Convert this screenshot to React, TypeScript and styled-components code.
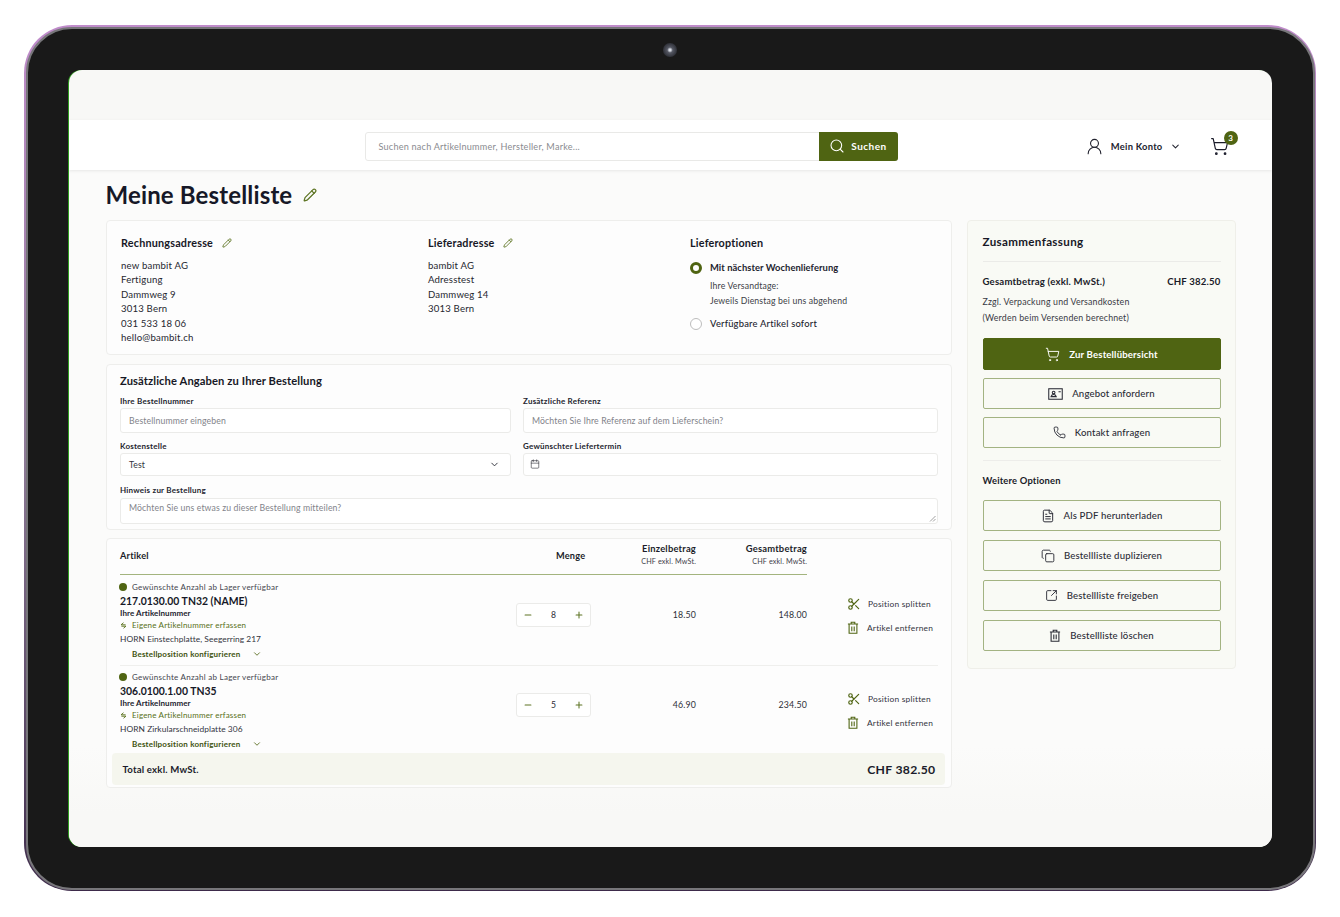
import React from "react";
import styled, { createGlobalStyle } from "styled-components";
import {
  Search, ChevronDown, ShoppingCart, Pencil, Scissors, Phone, Copy, SquareArrowOutUpRight, FileText, Calendar, Minus, Plus, UserRound,
} from "lucide-react";

const Global = createGlobalStyle`
  html, body { margin: 0; padding: 0; background: #fff; }
  body { font-family: "Lato", "Liberation Sans", sans-serif; color: #1b1c2b; -webkit-font-smoothing: antialiased; }
  * { box-sizing: border-box; }
`;
const green = "#4f6412";
const lineGreen = "#a3b382";

const Bezel = styled.div`
  width: 1292px; height: 866px; margin: 25px 24px 26px; padding: 1.5px;
  border-radius: 48px; background: linear-gradient(180deg, #c08ccb 0%, #8d7a96 50%, #3d2a4a 100%);
`;
const Frame = styled.div`
  position: relative; width: 100%; height: 100%; padding: 41px;
  border-radius: 46px; background: #191919; border: 2.5px solid #77767a;
`;
const Camera = styled.div`
  position: absolute; left: 635px; top: 14px; width: 14px; height: 14px; border-radius: 50%;
  background: radial-gradient(circle, #d8dce4 0 10%, #555863 28%, #33353d 65%, #26272c 100%);
`;
const Screen = styled.div`
  width: 1203px; height: 777px; border-radius: 13px; overflow: hidden; background: #f8f8f6;
  box-shadow: -1px 0 0 #2f9b1e; display: flex; flex-direction: column;
`;
const TopStrip = styled.div`height: 50px; flex: none;`;
const Header = styled.header`
  height: 50px; flex: none; background: #fff; box-shadow: 0 1px 3px rgba(30,30,30,.09); position: relative;
  display: flex; align-items: center; padding: 3px 34px 0 296px;
`;
const SearchBox = styled.div`
  width: 533px; height: 29px; display: flex; border: 1px solid #e9e9e7; border-radius: 3px; background: #fff;
`;
const SearchInput = styled.div`flex: 1; font-size: 9.1px; line-height: 27px; padding-left: 13px; color: #8a8b90; letter-spacing: .22px;`;
const SearchBtn = styled.div`
  width: 79px; margin: -1px; border-radius: 0 3px 3px 0; background: ${green}; color: #fff; display: flex;
  align-items: center; justify-content: center; gap: 6px; font-size: 10px; font-weight: 700; letter-spacing: .5px;
`;
const Account = styled.div`
  margin-left: auto; display: flex; align-items: center; font-size: 9.4px; font-weight: 700; letter-spacing: .25px; color: #22232f;
  & > span { margin: 0 7px 0 7px; }
`;
const CartWrap = styled.div`position: relative; margin-left: 29px; width: 28px; height: 22px; display: flex; align-items: center;`;
const Badge = styled.div`
  position: absolute; right: 0; top: -4px; width: 14px; height: 14px; border-radius: 50%; background: ${green};
  color: #fff; font-size: 8px; font-weight: 700; text-align: center; line-height: 14px;
`;
const Body = styled.main`
  flex: 1; background: linear-gradient(180deg, #fbfbfa 0%, #fbfbfa 85%, #f8f8f6 95%); padding: 0 36px 0 37px;
`;
const TitleRow = styled.div`
  height: 50px; display: flex; align-items: center; gap: 11px;
  h1 { margin: 0; font-size: 24px; line-height: 50px; font-weight: 700; color: #161827; letter-spacing: .15px; }
`;
const Columns = styled.div`display: grid; grid-template-columns: 846px 269px; column-gap: 15px; align-items: start;`;
const Stack = styled.div`display: flex; flex-direction: column; gap: 9px;`;
const Card = styled.section`background: #fdfdfd; border: 1px solid #eeeeec; border-radius: 4px;`;
const AddressCard = styled(Card)`
  height: 135px; padding: 15px 14.5px; display: grid; grid-template-columns: 307px 262px 1fr;
`;
const SubTitle = styled.h3`
  margin: 0; font-size: 10.8px; line-height: 14px; font-weight: 700; color: #171826; letter-spacing: .2px;
  display: flex; align-items: center; gap: ${p => p.$gap ?? 10}px;
`;
const AddrLines = styled.div`margin-top: 9px; font-size: 9.6px; line-height: 14.6px; color: #26272f; letter-spacing: .18px;`;
const RadioRow = styled.div`
  display: flex; align-items: center; gap: 8px; font-size: 9.4px; font-weight: ${p => p.$bold ? 700 : 500};
  letter-spacing: ${p => p.$bold ? ".06px" : ".2px"}; height: 14px; color: #23242f;
`;
const Radio = styled.span`
  width: 12px; height: 12px; border-radius: 50%; flex: none; background: #fff;
  border: ${p => p.$on ? `3.5px solid ${green}` : "1px solid #bdbdbd"};
`;
const RadioHint = styled.div`margin-left: 20px; font-size: 8.7px; line-height: 15.5px; color: #3c3d46; letter-spacing: .15px; margin-top: 3px; margin-bottom: 8px;`;
const RadioGroup = styled.div`margin-top: 11px;`;

const FormCard = styled(Card)`height: 166px; padding: 8px 13px 0 13.5px;`;
const FormTitle = styled.h2`margin: 0 0 7px; font-size: 11.2px; line-height: 15px; font-weight: 700; color: #171826; letter-spacing: .1px;`;
const FormGrid = styled.div`display: grid; grid-template-columns: 391px 415px; column-gap: 12px;`;
const Field = styled.div`display: flex; flex-direction: column; grid-column: ${p => p.$full ? "1 / -1" : "auto"};`;
const Label = styled.label`font-size: 8px; line-height: 12px; font-weight: 700; color: #24252f; letter-spacing: .22px; margin-bottom: 1px;`;
const InputBox = styled.div`
  height: ${p => p.$h}px; margin-bottom: ${p => p.$mb ?? 7}px; border: 1px solid #ebebe9; border-radius: 3px; background: #fff; padding: 0 8px;
  display: flex; align-items: center; position: relative; font-size: 8.7px; letter-spacing: .12px; color: ${p => p.$dark ? "#33343d" : "#82838a"};
`;
const SelectBox = styled(InputBox)`justify-content: space-between; padding-right: 10px;`;
const TextArea = styled(InputBox)`align-items: flex-start; padding-top: 3px; line-height: 12px; margin-top: 1px;`;
const DateIcon = styled(Calendar)`margin-left: -2px;`;
const Grip = styled.svg`position: absolute; right: 1px; bottom: 1px;`;

const TableCard = styled(Card)`height: 250px; margin-top: -1px; padding: 0 6px 2px 13.5px; display: flex; flex-direction: column; position: relative;`;
const Grid = styled.div`display: grid; grid-template-columns: 396px 75px 105px 111px 1fr;`;
const TableHead = styled(Grid)`
  height: 36px; padding-bottom: 2px; align-items: center; width: 687px; grid-template-columns: 396px 105px 75px 111px; border-bottom: 1px solid #a3b47e; font-size: 9.2px; font-weight: 700; color: #1c1d2a; letter-spacing: .2px;
`;
const HeadRight = styled.div`
  text-align: right; line-height: 13px; font-size: 9.4px; small { display: block; font-size: 7.2px; font-weight: 400; color: #3f4049; letter-spacing: .15px; }
`;
const HeadCenter = styled.div`padding-left: 40px;`;
const Row = styled(Grid)`
  height: ${p => p.$h}px; margin-right: 7px; align-items: start; border-bottom: ${p => p.$last ? "none" : "1px solid #efefed"};
  padding-top: ${p => p.$pt}px;
`;
const Info = styled.div``;
const Stock = styled.div`
  margin-left: -1px; display: flex; align-items: center; gap: 5px; font-size: 8px; line-height: 12px; color: #44454d; letter-spacing: .26px;
  &::before { content: ""; width: 8px; height: 8px; border-radius: 50%; background: ${green}; }
`;
const Sku = styled.div`margin-top: 1px; font-size: 10.4px; line-height: 14px; font-weight: 700; color: #161827; letter-spacing: .02px;`;
const Own = styled.div`margin-top: 1px; font-size: 8px; line-height: 9px; font-weight: 700; color: #22232e; letter-spacing: .08px;`;
const Link = styled.div`
  display: flex; align-items: center; gap: 5px; margin-top: 1px; font-size: 8px; line-height: 13px; color: #587019; letter-spacing: .18px;
`;
const Desc = styled.div`font-size: 8.4px; line-height: 15px; color: #33343d; letter-spacing: .05px;`;
const Config = styled.div`
  display: flex; align-items: center; gap: 12px; margin: 1px 0 0 12px; font-size: 8px; line-height: 13px; font-weight: 700; color: #40530f; letter-spacing: .2px;
`;
const Qty = styled.div`
  width: 75px; height: 24px; margin-top: 22px; border: 1px solid #ebebe9; border-radius: 3px; background: #fff; display: flex; align-items: center; justify-content: space-between;
  padding: 0 6px; font-size: 8.6px; color: #2a2b35;
`;
const Amount = styled.div`margin-top: 27px; line-height: 14px; text-align: right; font-size: 8.8px; color: #2e2f38; letter-spacing: .15px;`;
const Actions = styled.div`padding-left: 40px; margin-top: ${p => p.$at}px; display: flex; flex-direction: column; gap: 10px;`;
const Action = styled.div`
  display: flex; align-items: center; gap: ${p => p.$gap ?? 7}px; height: 14px; font-size: 8.4px; color: #33343d; letter-spacing: .22px;
`;
const Total = styled.div`
  position: absolute; left: 5px; right: 6px; bottom: 2px; height: 32px; background: #f5f6ee; border-radius: 4px;
  display: flex; align-items: center; justify-content: space-between; padding: 1px 9px 0 11px;
  font-weight: 700; color: #1b1c2b;
`;
const TotalLabel = styled.span`font-size: 9.6px; letter-spacing: .2px;`;
const TotalValue = styled.span`font-size: 12.2px; letter-spacing: .3px;`;

const Side = styled.aside`
  height: 449px; padding: 0 14px 0 15px; background: #f9faf5; border: 1px solid #efefe9; border-radius: 4px; display: flex; flex-direction: column;
`;
const SideTitle = styled.h2`
  margin: 0; height: 41px; padding-top: 13px; font-size: 11.6px; line-height: 15px; font-weight: 700; color: #171826; letter-spacing: .35px; border-bottom: 1px solid #ebebe8;
`;
const SumRow = styled.div`
  margin-top: 13px; display: flex; justify-content: space-between; font-size: 9.6px; line-height: 14px; font-weight: 700; letter-spacing: .2px; color: #1a1b28;
`;
const SumNote = styled.div`margin-top: 5px; font-size: 8.8px; line-height: 16.800px; color: #3a3b45; letter-spacing: .17px;`;
const Btn = styled.div`
  height: ${p => p.$h ?? 31}px; margin-top: ${p => p.$mt ?? 8}px; border-radius: 2px; display: flex; align-items: center; justify-content: center; gap: 9px;
  font-size: 9.6px; letter-spacing: .15px;
  background: ${p => p.$primary ? green : "transparent"}; color: ${p => p.$primary ? "#fff" : "#2b2c36"}; font-weight: ${p => p.$primary ? 700 : 500};
  border: 1px solid ${p => p.$primary ? green : lineGreen};
`;
const SideRule = styled.div`height: 1px; margin-top: 12px; background: #ededea;`;
const SideSub = styled.div`margin-top: 13px; font-size: 9.4px; line-height: 13px; font-weight: 700; letter-spacing: .18px; color: #1a1b28;`;

const TrashIcon = ({ size = 12, color = green }: { size?: number; color?: string }) => (
  <svg width={size} height={size * 1.1} viewBox="0 0 20 22" fill="none" stroke={color} strokeWidth="1.8">
    <path d="M1.500 5h17M7 5V2h6v3M3.500 5v15.500h13V5M8 9v8M12 9v8" />
  </svg>
);
const SwapIcon = () => (
  <svg width="7" height="7" viewBox="0 0 10 10" fill="none" stroke="#587019" strokeWidth="1.3">
    <path d="M5 1 1.500 4H8M5 9l3.500-3H2" />
  </svg>
);
const OfferIcon = () => (
  <svg width="15" height="12" viewBox="0 0 20 16" fill="none" stroke="#2b2c36" strokeWidth="1.4">
    <rect x="1" y="1" width="18" height="14" />
    <circle cx="7.500" cy="6" r="1.800" />
    <path d="M4 11.500c.6-2 2-2.800 3.500-2.800s2.900.8 3.500 2.800zM14 5h3" />
  </svg>
);
const PencilIcon = ({ s }: { s: number }) => <Pencil size={s} color="#5e7524" strokeWidth={2.1} />;

type Item = { sku: string; desc: string; qty: number; one: string; total: string; h: number; pt: number; at: number; last?: boolean };
const items: Item[] = [
  { sku: "217.0130.00 TN32 (NAME)", desc: "HORN Einstechplatte, Seegerring 217", qty: 8, one: "18.50", total: "148.00", h: 91, pt: 6, at: 16 },
  { sku: "306.0100.1.00 TN35", desc: "HORN Zirkularschneidplatte 306", qty: 5, one: "46.90", total: "234.50", h: 90, pt: 5, at: 21, last: true },
];

export default function App() {
  return (
    <>
      <Global />
      <Bezel>
        <Frame>
          <Camera />
          <Screen>
            <TopStrip />
            <Header>
              <SearchBox>
                <SearchInput>Suchen nach Artikelnummer, Hersteller, Marke...</SearchInput>
                <SearchBtn><Search size={16} strokeWidth={1.6} />Suchen</SearchBtn>
              </SearchBox>
              <Account>
                <UserRound size={19} strokeWidth={1.4} />
                <span>Mein Konto</span>
                <ChevronDown size={11} strokeWidth={2.2} />
              </Account>
              <CartWrap>
                <ShoppingCart size={19} strokeWidth={1.5} />
                <Badge>3</Badge>
              </CartWrap>
            </Header>
            <Body>
              <TitleRow>
                <h1>Meine Bestelliste</h1>
                <PencilIcon s={14} />
              </TitleRow>
              <Columns>
                <Stack>
                  <AddressCard>
                    <div>
                      <SubTitle $gap={9}>Rechnungsadresse <PencilIcon s={10} /></SubTitle>
                      <AddrLines>new bambit AG<br />Fertigung<br />Dammweg 9<br />3013 Bern<br />031 533 18 06<br />hello@bambit.ch</AddrLines>
                    </div>
                    <div>
                      <SubTitle $gap={8}>Lieferadresse <PencilIcon s={10} /></SubTitle>
                      <AddrLines>bambit AG<br />Adresstest<br />Dammweg 14<br />3013 Bern</AddrLines>
                    </div>
                    <div>
                      <SubTitle>Lieferoptionen</SubTitle>
                      <RadioGroup>
                        <RadioRow $bold><Radio $on />Mit nächster Wochenlieferung</RadioRow>
                        <RadioHint>Ihre Versandtage:<br />Jeweils Dienstag bei uns abgehend</RadioHint>
                        <RadioRow><Radio />Verfügbare Artikel sofort</RadioRow>
                      </RadioGroup>
                    </div>
                  </AddressCard>
                  <FormCard>
                    <FormTitle>Zusätzliche Angaben zu Ihrer Bestellung</FormTitle>
                    <FormGrid>
                      <Field><Label>Ihre Bestellnummer</Label><InputBox $h={25}>Bestellnummer eingeben</InputBox></Field>
                      <Field><Label>Zusätzliche Referenz</Label><InputBox $h={25}>Möchten Sie Ihre Referenz auf dem Lieferschein?</InputBox></Field>
                      <Field><Label>Kostenstelle</Label>
                        <SelectBox $h={23} $mb={8} $dark>Test<ChevronDown size={11} strokeWidth={2} color="#2a2b35" /></SelectBox>
                      </Field>
                      <Field><Label>Gewünschter Liefertermin</Label><InputBox $h={23} $mb={8}><DateIcon size={10} strokeWidth={1.5} color="#33343d" /></InputBox></Field>
                      <Field $full><Label>Hinweis zur Bestellung</Label>
                        <TextArea $h={26} $mb={0}>Möchten Sie uns etwas zu dieser Bestellung mitteilen?
                          <Grip width="7" height="7" viewBox="0 0 7 7" stroke="#888" strokeWidth=".8"><path d="M1 6.500 6.500 1M4 6.500 6.500 4" /></Grip>
                        </TextArea>
                      </Field>
                    </FormGrid>
                  </FormCard>
                  <TableCard>
                    <TableHead>
                      <div>Artikel</div>
                      <HeadCenter>Menge</HeadCenter>
                      <HeadRight>Einzelbetrag<small>CHF exkl. MwSt.</small></HeadRight>
                      <HeadRight>Gesamtbetrag<small>CHF exkl. MwSt.</small></HeadRight>
                    </TableHead>
                    {items.map(it => (
                      <Row key={it.sku} $h={it.h} $pt={it.pt} $last={it.last}>
                        <Info>
                          <Stock>Gewünschte Anzahl ab Lager verfügbar</Stock>
                          <Sku>{it.sku}</Sku>
                          <Own>Ihre Artikelnummer</Own>
                          <Link><SwapIcon />Eigene Artikelnummer erfassen</Link>
                          <Desc>{it.desc}</Desc>
                          <Config>Bestellposition konfigurieren <ChevronDown size={10} strokeWidth={2} color={green} /></Config>
                        </Info>
                        <Qty><Minus size={10} strokeWidth={2.5} color="#5e7524" />{it.qty}<Plus size={10} strokeWidth={2.5} color="#5e7524" /></Qty>
                        <Amount>{it.one}</Amount>
                        <Amount>{it.total}</Amount>
                        <Actions $at={it.at}>
                          <Action><Scissors size={14} strokeWidth={2} color={green} />Position splitten</Action>
                          <Action $gap={8}><TrashIcon />Artikel entfernen</Action>
                        </Actions>
                      </Row>
                    ))}
                    <Total><TotalLabel>Total exkl. MwSt.</TotalLabel><TotalValue>CHF 382.50</TotalValue></Total>
                  </TableCard>
                </Stack>
                <Side>
                  <SideTitle>Zusammenfassung</SideTitle>
                  <SumRow><span>Gesamtbetrag (exkl. MwSt.)</span><span>CHF 382.50</span></SumRow>
                  <SumNote>Zzgl. Verpackung und Versandkosten<br />(Werden beim Versenden berechnet)</SumNote>
                  <Btn $primary $h={32} $mt={11}><ShoppingCart size={15} strokeWidth={1.5} />Zur Bestellübersicht</Btn>
                  <Btn><OfferIcon />Angebot anfordern</Btn>
                  <Btn><Phone size={13} strokeWidth={1.7} />Kontakt anfragen</Btn>
                  <SideRule />
                  <SideSub>Weitere Optionen</SideSub>
                  <Btn $mt={13}><FileText size={14} strokeWidth={1.7} />Als PDF herunterladen</Btn>
                  <Btn $mt={9}><Copy size={14} strokeWidth={1.6} />Bestellliste duplizieren</Btn>
                  <Btn $mt={9}><SquareArrowOutUpRight size={13} strokeWidth={1.7} />Bestellliste freigeben</Btn>
                  <Btn $mt={9}><TrashIcon size={12} color="#2b2c36" />Bestellliste löschen</Btn>
                </Side>
              </Columns>
            </Body>
          </Screen>
        </Frame>
      </Bezel>
    </>
  );
}
